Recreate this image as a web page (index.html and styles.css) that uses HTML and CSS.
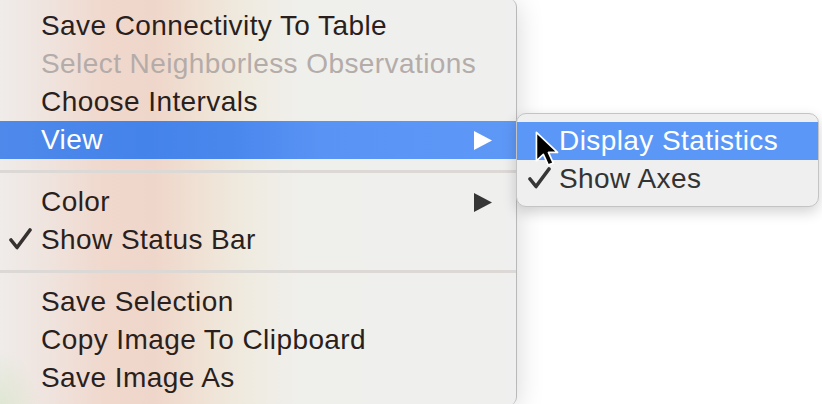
FILE: index.html
```html
<!DOCTYPE html>
<html>
<head>
<meta charset="utf-8">
<link rel="stylesheet" href="styles.css">
</head>
<body>
<div class="stage">
  <div class="menu main">
    <div class="item">Save Connectivity To Table</div>
    <div class="item disabled">Select Neighborless Observations</div>
    <div class="item">Choose Intervals</div>
    <div class="item active">View
      <svg class="arrow" width="18" height="19" viewBox="0 0 18 19"><polygon points="0,0 18,9.5 0,19" fill="#fff"/></svg>
    </div>
    <div class="sep"></div>
    <div class="item">Color
      <svg class="arrow" width="18" height="19" viewBox="0 0 18 19"><polygon points="0,0 18,9.5 0,19" fill="#363636"/></svg>
    </div>
    <div class="item"><svg class="check" width="23" height="22" viewBox="0 0 23 22"><polyline points="2,12 8,19.5 21,2" fill="none" stroke="#363030" stroke-width="3.6" stroke-linecap="round" stroke-linejoin="round"/></svg>Show Status Bar</div>
    <div class="sep"></div>
    <div class="item">Save Selection</div>
    <div class="item">Copy Image To Clipboard</div>
    <div class="item">Save Image As</div>
  </div>

  <div class="menu sub">
    <div class="item active">Display Statistics</div>
    <div class="item"><svg class="check" width="23" height="22" viewBox="0 0 23 22"><polyline points="2,12 8,19.5 21,2" fill="none" stroke="#363636" stroke-width="3.6" stroke-linecap="round" stroke-linejoin="round"/></svg>Show Axes</div>
  </div>

  <svg class="cursor" width="31" height="40" viewBox="0 0 20 26">
    <path d="M1.5 1.5 L1.5 20 L6 15.8 L9.2 22.8 L12.4 21.4 L9.3 14.6 L15.2 14.6 Z" fill="#000" stroke="#fff" stroke-width="1.1" stroke-linejoin="round"/>
  </svg>
</div>
</body>
</html>
```

FILE: styles.css
```css
html, body {
  margin: 0;
  padding: 0;
  background: #ffffff;
  overflow: hidden;
}

.stage {
  position: relative;
  width: 822px;
  height: 404px;
  overflow: hidden;
}

.menu {
  font-family: "Liberation Sans", Arial, sans-serif;
  font-size: 28px;
  letter-spacing: 0.42px;
  color: #2a1f1c;
  box-sizing: border-box;
}

.main {
  width: 517px;
  height: 406px;
  margin-top: -1px;
  padding-top: 8px;
  border-right: 1px solid #b9b9b9;
  border-radius: 0 8px 8px 0;
  box-shadow: 0 4px 28px rgba(0, 0, 0, 0.16);
  background:
    radial-gradient(ellipse 40px 60px at 0px 410px, rgba(200, 225, 180, 0.45), rgba(200, 225, 180, 0) 100%),
    linear-gradient(90deg,
      #efecea 0%,
      #efe3dd 10%,
      #f0d8cd 20%,
      #efd6ca 30%,
      #efe3d6 40%,
      #efebe0 48%,
      #efefec 58%,
      #efefef 100%);
}

.item {
  position: relative;
  height: 38px;
  line-height: 38px;
  padding-left: 41px;
  white-space: nowrap;
}

.item.disabled {
  color: #b4aca9;
}

.item.active {
  color: #ffffff;
}

.main .item.active {
  background: linear-gradient(90deg, #4f89ea 0%, #4483ea 28%, #4a87ed 45%, #5993f4 62%, #5e98f7 100%);
}

.sep {
  height: 24px;
  display: flex;
  align-items: center;
}

.sep::before {
  content: "";
  display: block;
  width: 100%;
  height: 3px;
  background: #dcd8d6;
}

.arrow {
  position: absolute;
  left: 474px;
  top: 10px;
}

.check {
  position: absolute;
  left: 9px;
  top: 7px;
}

.sub {
  position: absolute;
  left: 516px;
  top: 113px;
  width: 303px;
  height: 94px;
  padding-top: 8px;
  background: #efefef;
  border: 1px solid #c4c4c4;
  border-radius: 10px;
  box-shadow: 0 5px 14px rgba(0, 0, 0, 0.18);
  color: #333333;
}

.sub .item {
  padding-left: 42px;
}

.sub .item.active {
  background: #5b97f7;
  color: #ffffff;
}

.sub .check {
  left: 11px;
}

.cursor {
  position: absolute;
  left: 534px;
  top: 130px;
}
```
